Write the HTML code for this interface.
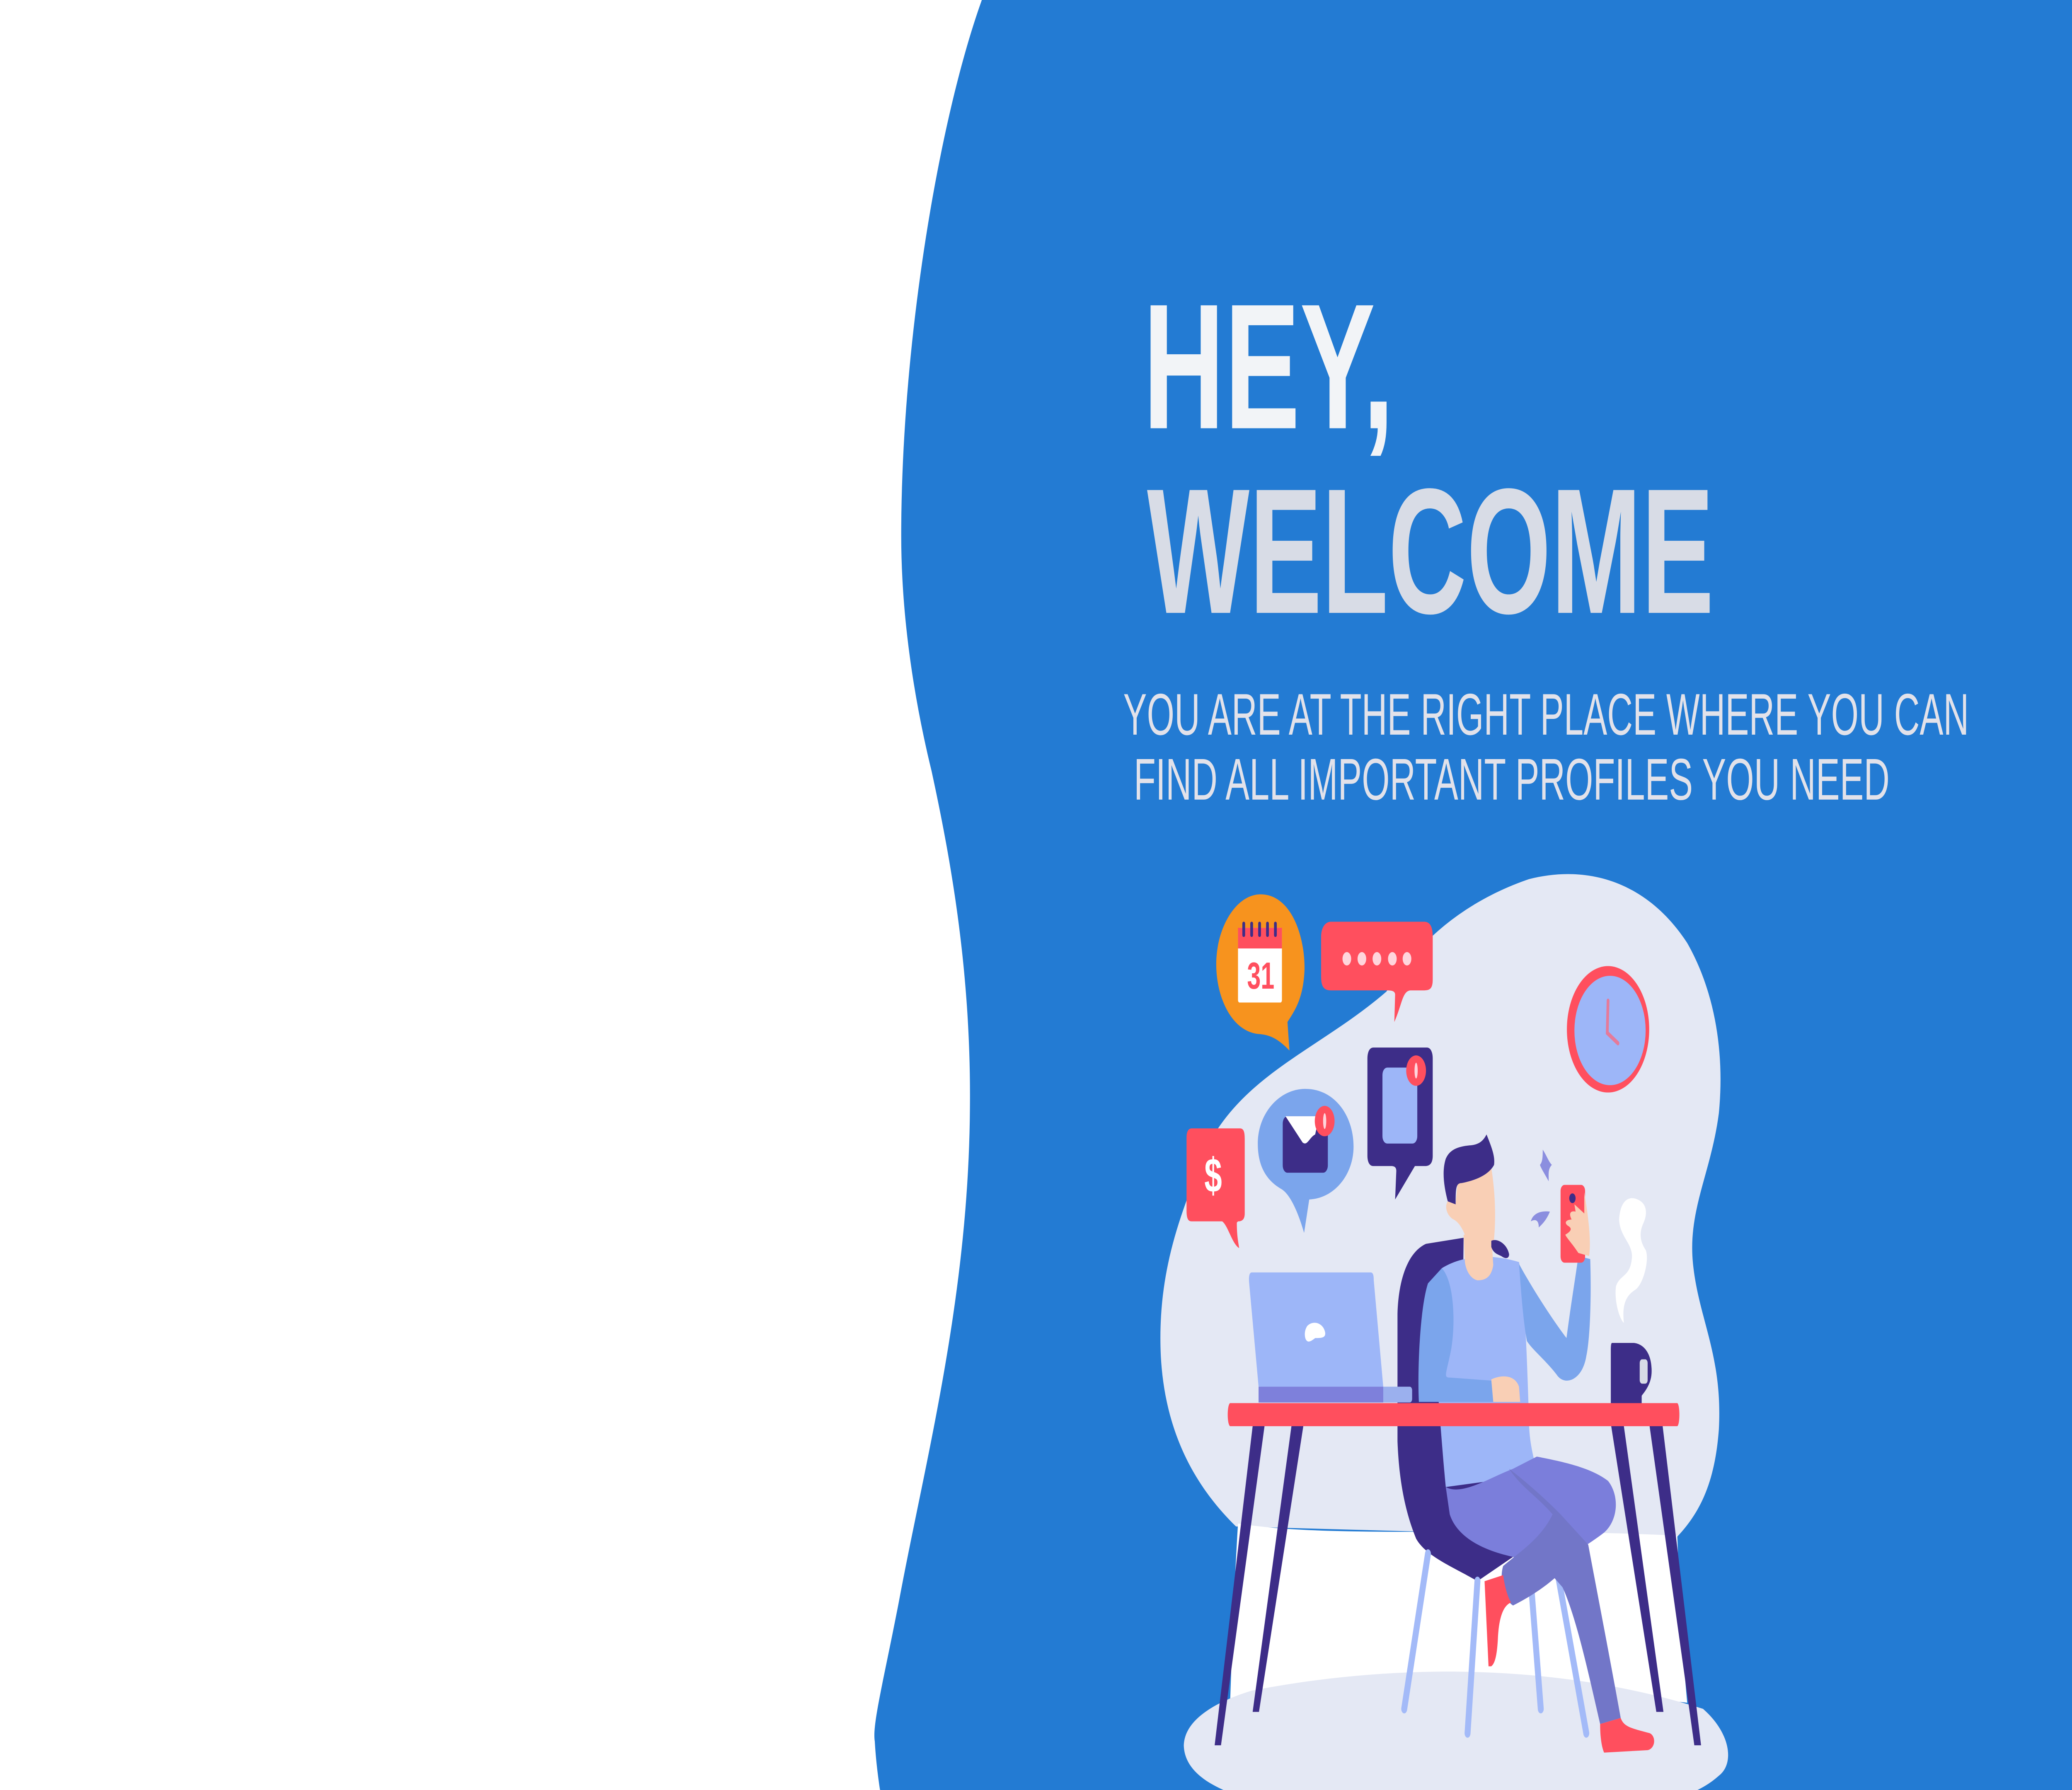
<!DOCTYPE html>
<html><head><meta charset="utf-8"><style>
html,body{margin:0;padding:0;background:#fff;width:100%;height:100%;overflow:hidden;}
svg{display:block;width:100vw;height:100vh;}
</style></head><body>
<svg viewBox="0 0 1568 882" preserveAspectRatio="none" xmlns="http://www.w3.org/2000/svg">
<rect width="1568" height="882" fill="#fff"/>
<path d="M743,0 C710,60 682,170 682,264 C682,300 690,340 705,380 C720,425 735,480 734,546 C733,640 700,720 680,790 C668,830 660,850 662,858 C663,870 666,882 666,882 L1568,882 L1568,0 Z" fill="#237BD3"/>

<text x="865" y="211" font-family="Liberation Sans, sans-serif" font-weight="bold" font-size="88" fill="#F2F4F7" textLength="190" lengthAdjust="spacingAndGlyphs">HEY,</text>
<text x="868" y="302" font-family="Liberation Sans, sans-serif" font-weight="bold" font-size="88" fill="#D8DCE6" textLength="429" lengthAdjust="spacingAndGlyphs">WELCOME</text>
<text x="850" y="362" font-family="Liberation Sans, sans-serif" font-size="29" fill="#E2E2EA" textLength="640" lengthAdjust="spacingAndGlyphs">YOU ARE AT THE RIGHT PLACE WHERE YOU CAN</text>
<text x="858" y="394" font-family="Liberation Sans, sans-serif" font-size="29" fill="#E2E2EA" textLength="572" lengthAdjust="spacingAndGlyphs">FIND ALL IMPORTANT PROFILES YOU NEED</text>

<g transform="translate(857.5,428.7) scale(0.2995)">
  <path d="M640,200 C700,140 800,60 1000,15 C1150,-10 1300,20 1400,120 C1470,200 1495,300 1480,400 C1460,500 1400,560 1415,650 C1430,740 1490,800 1480,920 C1470,1010 1430,1060 1370,1100 L260,1080 C150,1010 80,920 70,800 C60,660 120,560 200,440 C300,330 480,290 640,200 Z" fill="#E4E8F4"/>
  <path d="M265,1075 C500,1100 900,1080 1375,1095 C1380,1200 1390,1300 1400,1370 C900,1330 500,1340 245,1370 C250,1280 255,1180 265,1075 Z" fill="#fff"/>
  <path d="M300,1350 C700,1300 1100,1310 1440,1380 C1510,1420 1520,1470 1480,1490 C1420,1525 1350,1530 1300,1530 L300,1530 C220,1515 130,1490 128,1440 C130,1400 200,1370 300,1350 Z" fill="#E4E8F4"/>

  <path d="M322,40 C400,40 435,110 433,165 C430,210 410,230 390,250 L395,297 C370,280 350,272 322,270 C250,268 210,210 210,155 C210,95 260,40 322,40 Z" fill="#F7931E"/>
  <rect x="265" y="95" width="111" height="123" rx="4" fill="#fff"/>
  <rect x="265" y="95" width="111" height="34" fill="#FF4F5E"/>
  <g fill="#3D2D88"><rect x="276" y="85" width="7" height="25" rx="3"/><rect x="296" y="85" width="7" height="25" rx="3"/><rect x="316" y="85" width="7" height="25" rx="3"/><rect x="336" y="85" width="7" height="25" rx="3"/><rect x="356" y="85" width="7" height="25" rx="3"/></g>
  <text x="288" y="195" font-family="Liberation Sans, sans-serif" font-weight="bold" font-size="62" fill="#FF4F5E">31</text>

  <path d="M500,85 L735,85 C752,85 757,95 757,110 L757,180 C757,195 750,198 735,198 L700,198 C680,200 680,220 660,250 L662,205 C662,198 650,198 640,198 L500,198 C480,198 475,190 475,175 L475,110 C475,95 485,85 500,85 Z" fill="#FF4F5E"/>
  <g fill="#FFD5DC"><circle cx="540" cy="146" r="11"/><circle cx="578" cy="146" r="11"/><circle cx="616" cy="146" r="11"/><circle cx="655" cy="146" r="11"/><circle cx="692" cy="146" r="11"/></g>

  <circle cx="1200" cy="262" r="104" fill="#FF4F5E"/>
  <circle cx="1205" cy="264" r="90" fill="#9DB6F8"/>
  <path d="M1200,215 L1198,268 L1225,285" stroke="#E57A9A" stroke-width="7" fill="none" stroke-linecap="round"/>

  <path d="M148,425 L270,425 C280,425 282,432 282,442 L282,565 C282,575 275,578 265,578 L262,580 C262,600 265,610 268,622 C250,615 240,585 225,578 L148,578 C138,578 135,572 135,560 L135,440 C135,430 140,425 148,425 Z" fill="#FF4F5E"/>
  <text x="180" y="530" font-family="Liberation Sans, sans-serif" font-weight="bold" font-size="80" fill="#fff">$</text>

  <path d="M435,360 C510,360 557,405 557,455 C557,500 510,540 445,542 L432,597 C420,570 400,535 375,525 C340,512 315,490 315,450 C315,400 370,360 435,360 Z" fill="#7BA5EC"/>
  <rect x="378" y="405" width="114" height="93" rx="12" fill="#3D2D88"/>
  <path d="M385,405 L470,405 L460,435 C445,440 440,455 428,448 Z" fill="#fff"/>
  <circle cx="484" cy="413" r="25" fill="#FF4F5E"/>
  <ellipse cx="484" cy="413" rx="4" ry="13" fill="#FFD5DC"/>

  <path d="M607,292 L742,292 C752,292 757,300 757,310 L757,470 C757,482 750,487 738,487 L712,487 L662,542 L665,495 C665,489 660,487 652,487 L607,487 C597,487 592,480 592,470 L592,310 C592,300 597,292 607,292 Z" fill="#3D2D88"/>
  <rect x="630" y="325" width="88" height="125" rx="12" fill="#9DB6F8"/>
  <circle cx="715" cy="330" r="25" fill="#FF4F5E"/>
  <ellipse cx="715" cy="330" rx="4" ry="13" fill="#FFD5DC"/>

  <path d="M835,605 L740,615 C690,630 670,680 668,730 L668,940 C672,1010 690,1060 715,1100 C740,1130 820,1150 870,1170 L960,1130 L900,940 L830,900 Z" fill="#3D2D88"/>
  <g stroke="#A3BAF8" stroke-width="15" stroke-linecap="round" fill="none">
    <line x1="745" y1="1125" x2="685" y2="1380"/>
    <line x1="870" y1="1170" x2="845" y2="1420"/>
    <line x1="1005" y1="1170" x2="1030" y2="1380"/>
    <line x1="1075" y1="1165" x2="1145" y2="1420"/>
  </g>

  <path d="M300,662 L600,662 C607,662 608,668 608,675 L632,850 L317,850 L293,678 C292,668 294,662 300,662 Z" fill="#9DB6F8"/>
  <path d="M440,750 C455,740 480,745 485,760 C488,770 475,770 460,770 C450,775 440,780 435,770 C432,762 435,755 440,750 Z" fill="#fff"/>
  <rect x="317" y="850" width="388" height="26" rx="6" fill="#9BB0EE"/>
  <rect x="317" y="850" width="315" height="26" fill="#7E80DB"/>

  <path d="M1210,778 L1265,778 C1295,780 1312,800 1310,828 C1308,848 1290,860 1285,865 L1285,880 L1207,880 L1207,790 C1207,782 1208,778 1210,778 Z" fill="#3D2D88"/>
  <rect x="1280" y="805" width="20" height="40" rx="6" fill="#D8DCE6"/>
  <path d="M1265,540 C1300,545 1300,565 1290,580 C1275,600 1285,615 1295,625 C1305,640 1290,680 1270,690 C1245,700 1235,715 1240,745 C1230,740 1215,710 1220,685 C1230,665 1255,670 1260,640 C1265,615 1230,605 1228,575 C1230,550 1245,538 1265,540 Z" fill="#fff"/>

  <path d="M780,655 C830,635 900,630 975,645 C990,700 995,800 1000,900 C1000,940 1010,960 1020,990 L960,1000 L790,1015 C780,950 770,850 760,780 Z" fill="#9DB6F8"/>
  <path d="M780,655 C815,680 815,760 800,800 C790,830 785,835 800,835 L905,840 L910,875 L722,875 C718,820 725,720 745,680 Z" fill="#7BA5EC"/>
  <path d="M905,838 C930,830 965,830 975,850 L978,875 L910,875 Z" fill="#F9CFB5"/>
  <path d="M975,648 C1010,690 1060,740 1095,770 C1105,720 1120,660 1125,635 L1155,640 C1158,700 1155,770 1145,800 C1135,840 1090,850 1070,830 C1040,805 1010,790 995,775 C985,740 980,690 975,648 Z" fill="#7BA5EC"/>
  <rect x="1080" y="518" width="62" height="128" rx="10" fill="#FF4F5E"/>
  <circle cx="1110" cy="540" r="8" fill="#3D2D88"/>
  <path d="M1115,550 L1140,565 L1140,530 C1150,570 1158,610 1152,635 L1125,630 C1110,615 1095,605 1092,600 C1105,595 1112,590 1098,585 C1088,580 1095,575 1108,575 C1100,565 1105,560 1118,562 Z" fill="#F9CFB5"/>
  <path d="M1035,460 C1045,470 1050,480 1058,485 C1048,492 1050,500 1050,512 C1040,500 1030,490 1028,485 C1035,480 1035,470 1035,460 Z" fill="#8B8EDF"/>
  <path d="M1005,578 C1010,565 1030,560 1053,562 C1045,575 1035,582 1025,588 C1025,575 1015,574 1005,578 Z" fill="#8B8EDF"/>
  <path d="M835,600 L905,600 L910,650 C905,670 890,675 870,675 C850,672 838,655 838,640 Z" fill="#F9CFB5"/>
  <path d="M820,515 C860,505 895,495 905,490 C915,530 918,575 910,620 L845,615 C838,595 825,580 810,575 C795,570 785,555 795,545 L815,548 Z" fill="#F9CFB5"/>
  <path d="M905,610 C920,605 945,615 950,632 C950,640 940,640 930,635 C920,632 910,630 905,620 Z" fill="#3D2D88"/>
  <path d="M893,435 C905,455 915,470 912,485 C900,500 870,510 830,515 C815,515 815,525 815,550 L795,545 C785,520 780,495 790,475 C800,460 820,455 850,453 C875,452 885,445 893,435 Z" fill="#3D2D88"/>

  <path d="M245,877 L1375,877 C1382,880 1382,912 1375,915 L245,915 C237,912 237,880 245,877 Z" fill="#FF4F5E"/>
  <g fill="#3D2D88">
    <path d="M302,915 L332,915 L222,1440 L206,1440 Z"/>
    <path d="M400,915 L430,915 L318,1385 L302,1385 Z"/>
    <path d="M1208,915 L1240,915 L1340,1385 L1322,1385 Z"/>
    <path d="M1305,915 L1338,915 L1435,1440 L1418,1440 Z"/>
  </g>

  <path d="M790,1015 C830,1030 900,1000 960,985 L1020,965 C1100,975 1160,985 1200,1005 C1230,1030 1225,1070 1190,1090 C1130,1120 1030,1160 960,1130 C890,1120 820,1100 800,1060 Z" fill="#7B7EDB"/>
  <path d="M950,985 C1000,1010 1050,1040 1080,1060 L1150,1110 C1170,1180 1200,1280 1232,1395 L1180,1405 C1150,1320 1120,1230 1085,1180 L1065,1165 C1030,1185 990,1200 960,1210 C935,1200 925,1165 935,1145 C980,1120 1030,1100 1060,1060 C1020,1030 980,1015 950,985 Z" fill="#7276C8"/>
  <path d="M1180,1405 L1232,1395 C1240,1410 1260,1412 1305,1420 C1322,1425 1320,1445 1300,1448 L1190,1452 C1182,1440 1180,1420 1180,1405 Z" fill="#FF4F5E"/>
  <path d="M888,1170 L935,1160 C940,1185 950,1200 955,1205 C935,1210 925,1230 922,1260 C920,1290 915,1305 905,1310 L898,1310 Z" fill="#FF4F5E"/>
</g>
</svg>
</body></html>
